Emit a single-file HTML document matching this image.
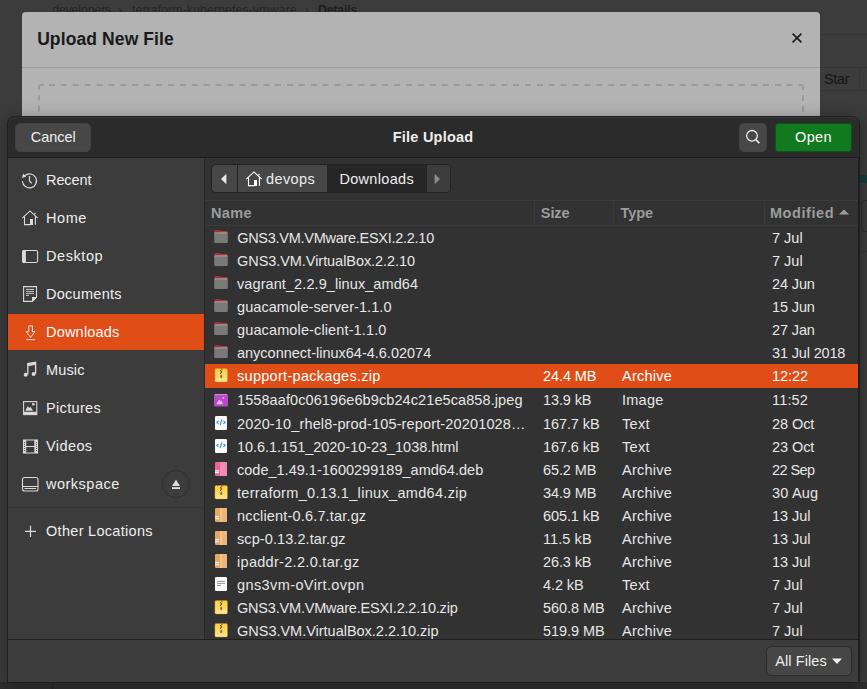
<!DOCTYPE html>
<html><head><meta charset="utf-8">
<style>
*{margin:0;padding:0;box-sizing:border-box}
html,body{width:867px;height:689px;overflow:hidden;background:#3c3c3c;font-family:"Liberation Sans",sans-serif}
.a{position:absolute}
.t{position:absolute;white-space:nowrap;line-height:14px;font-size:14.5px}
.i{position:absolute;width:16px;height:16px}
.i svg,.s svg{display:block}
.s{position:absolute;width:24px;height:24px}
#modal{left:22px;top:12px;width:798px;height:120px;background:#b3b3b3;border-radius:4px 4px 0 0}
#dlg{left:7px;top:116px;width:853px;height:567px;background:#1f1f1f;border-radius:8px 8px 0 0;box-shadow:0 3px 16px 1px rgba(0,0,0,.3)}
#hdr{left:8px;top:117px;width:851px;height:40px;background:#2b2b2b;border-radius:7px 7px 0 0;box-shadow:inset 0 1px 0 #343434}
#side{left:8px;top:158px;width:196px;height:481px;background:#3c3c3c}
#list{left:205px;top:158px;width:653px;height:481px;background:#323232}
#foot{left:8px;top:640px;width:850px;height:42px;background:#3c3c3c}
.btn{position:absolute;background:#474747;border:1px solid #424242;border-radius:5px}
.hl{position:absolute;height:1px;background:#3b3b3b}
.vl{position:absolute;width:1px;background:#3b3b3b}
</style></head><body>
<div class="t" id="t0" style="left:52.00px;top:3px;color:#262626;font-size:12.5px;letter-spacing:-0.200px">developers</div>
<div class="t" id="t1" style="left:118.00px;top:3px;color:#262626;font-size:12.5px">&#x203A;</div>
<div class="t" id="t2" style="left:132.00px;top:3px;color:#262626;font-size:12.5px">terraform-kubernetes-vmware</div>
<div class="t" id="t3" style="left:305.00px;top:3px;color:#262626;font-size:12.5px">&#x203A;</div>
<div class="t" id="t4" style="left:318.00px;top:3px;color:#1e1e1e;font-size:12.5px;font-weight:bold;letter-spacing:-0.300px">Details</div>
<div class="a" style="left:859px;top:175px;width:8px;height:8px;background:#173d3b"></div>
<div class="a" style="left:861px;top:200px;width:20px;height:32px;border:1px solid #2c2c2c;border-radius:4px"></div>
<div class="a hl" style="left:859px;top:251px;width:8px;background:#333"></div>
<div class="a" id="modal"></div>
<div class="a hl" style="left:22px;top:67px;width:798px;background:#9e9e9e"></div>
<div class="t" id="t5" style="left:37.14px;top:32px;color:#1a1a1a;font-size:17.5px;font-weight:bold;letter-spacing:0.108px">Upload New File</div>
<svg class="a" style="left:0;top:0" width="867" height="130"><g stroke="#9a9a9a" stroke-width="2" fill="none"><path d="M39 89.5 V87 Q39 85 41 85 H43.5"/><path d="M49 85 H797" stroke-dasharray="6 5.9"/><path d="M798.5 85 H801 Q803 85 803 87 V90"/><path d="M39 95 V130" stroke-dasharray="5.6 5.2"/><path d="M803 95 V130" stroke-dasharray="6 5"/></g></svg>
<svg class="a" style="left:790px;top:31px" width="14" height="14" viewBox="0 0 14 14"><path d="M2.6 2.6 L11.4 11.4 M11.4 2.6 L2.6 11.4" stroke="#1c1c1c" stroke-width="1.7"/></svg>
<div class="a hl" style="left:820px;top:34px;width:47px;background:#353535"></div>
<div class="a hl" style="left:820px;top:67px;width:47px;background:#353535"></div>
<div class="a hl" style="left:820px;top:90px;width:47px;background:#353535"></div>
<div class="a vl" style="left:859px;top:67px;height:23px;background:#353535"></div>
<div class="t" id="t6" style="left:824.06px;top:72px;color:#141414;font-size:14.5px;letter-spacing:-0.463px">Star</div>
<div class="a" style="left:0;top:682px;width:867px;height:7px;background:#2e2e2e"></div><div class="a vl" style="left:52px;top:682px;height:7px;background:#232323"></div>
<div class="a" id="dlg"></div><div class="a" id="hdr"></div><div class="a" id="side"></div><div class="a" id="list"></div><div class="a" id="foot"></div>
<div class="btn" style="left:15px;top:123px;width:76px;height:29px"></div>
<div class="t" id="t7" style="left:30.74px;top:130px;color:#eeeeee;font-size:14.5px;letter-spacing:-0.041px">Cancel</div>
<div class="t" id="t8" style="left:392.77px;top:130px;color:#eeeeee;font-size:14.5px;font-weight:bold;letter-spacing:0.229px">File Upload</div>
<div class="btn" style="left:739px;top:123px;width:28px;height:29px"></div>
<svg class="a" style="left:743px;top:127px" width="20" height="20" viewBox="0 0 20 20"><circle cx="9" cy="8.8" r="5.3" stroke="#e8e8e8" stroke-width="1.3" fill="none"/><path d="M12.8 12.6 L16.3 16.1" stroke="#e8e8e8" stroke-width="1.8"/></svg>
<div class="btn" style="left:775px;top:123px;width:77px;height:29px;background:#117a1f;border-color:#0b5214;border-radius:3px"></div>
<div class="t" id="t9" style="left:794.94px;top:130px;color:#ffffff;font-size:14.5px;letter-spacing:0.422px">Open</div>
<div class="a" style="left:8px;top:314px;width:196px;height:36px;background:#e14d17"></div>
<div class="s" style="left:18px;top:168px"><svg width="24" height="24" viewBox="0 0 24 24"><path d="M6.9 7.6 A7 7 0 1 1 4.5 13.2" stroke="#dadada" stroke-width="1.2" fill="none"/><path d="M3.9 9.9 L8.3 8.4 L5.2 5.8 Z" fill="#dadada"/><path d="M11.5 8.1 V13.2 L13.9 15.3" stroke="#dadada" stroke-width="1.2" fill="none"/></svg></div>
<div class="t" id="t10" style="left:46.00px;top:173px;color:#eeeeee;font-size:14.5px;letter-spacing:-0.087px">Recent</div>
<div class="s" style="left:18px;top:206px"><svg width="24" height="24" viewBox="0 0 24 24"><path d="M4.3 12.2 L12 4.9 L19.7 12.2" stroke="#dadada" stroke-width="1.1" fill="none"/><path d="M6.5 10.6 V18.6 H12.6 M17.4 10.6 V18.8" stroke="#dadada" stroke-width="1.1" fill="none"/><rect x="12" y="13" width="3" height="6" fill="#dadada"/><circle cx="17" cy="7.6" r="0.8" fill="#dadada"/></svg></div>
<div class="t" id="t11" style="left:46.00px;top:211px;color:#eeeeee;font-size:14.5px;letter-spacing:0.567px">Home</div>
<div class="s" style="left:18px;top:244px"><svg width="24" height="24" viewBox="0 0 24 24"><rect x="4.6" y="6.5" width="15" height="12" rx="1.6" stroke="#dadada" stroke-width="1.1" fill="none"/><rect x="4.3" y="6.2" width="3.6" height="12.6" rx="1" fill="#dadada"/></svg></div>
<div class="t" id="t12" style="left:46.00px;top:249px;color:#eeeeee;font-size:14.5px;letter-spacing:0.568px">Desktop</div>
<div class="s" style="left:18px;top:282px"><svg width="24" height="24" viewBox="0 0 24 24"><path d="M5.6 4.6 H18.5 V15 L14.4 19.4 H5.6 Z" stroke="#dadada" stroke-width="1.1" fill="none"/><path d="M14 15 H18.8 L14 19.8 Z" fill="#dadada"/><path d="M8 7.4 H16 M8 9.4 H16 M8 11.4 H16 M8 13.4 H11" stroke="#dadada" stroke-width="0.9"/></svg></div>
<div class="t" id="t13" style="left:46.00px;top:287px;color:#eeeeee;font-size:14.5px;letter-spacing:0.278px">Documents</div>
<div class="s" style="left:18px;top:320px"><svg width="24" height="24" viewBox="0 0 24 24"><path d="M10.8 5.8 H14.4 V11.6 H16.9 L12.6 17.4 L8.3 11.6 H10.8 Z" stroke="#ffe6d6" stroke-width="1" fill="none"/><path d="M8.2 19.6 H17" stroke="#ffe6d6" stroke-width="1"/></svg></div>
<div class="t" id="t14" style="left:46.00px;top:325px;color:#ffffff;font-size:14.5px;letter-spacing:0.202px">Downloads</div>
<div class="s" style="left:18px;top:358px"><svg width="24" height="24" viewBox="0 0 24 24"><path d="M9.8 16.5 V5.6 L17.6 4.2 V15.8" stroke="#dadada" stroke-width="1.3" fill="none"/><path d="M9.8 5.6 L17.6 4.2 V6.8 L9.8 8.2 Z" fill="#dadada"/><circle cx="7.7" cy="16.8" r="2" fill="#dadada"/><circle cx="15.6" cy="16" r="2" fill="#dadada"/></svg></div>
<div class="t" id="t15" style="left:46.00px;top:363px;color:#eeeeee;font-size:14.5px;letter-spacing:0.148px">Music</div>
<div class="s" style="left:18px;top:396px"><svg width="24" height="24" viewBox="0 0 24 24"><rect x="5.6" y="5.6" width="13.2" height="13" stroke="#dadada" stroke-width="1.1" fill="none"/><rect x="5.6" y="15.8" width="13.2" height="2.8" fill="#dadada"/><path d="M7.2 14.8 L9.8 10 L11.2 12 L12.4 10.8 L15 14.8 Z" fill="#dadada"/><circle cx="15.3" cy="8.3" r="1.3" fill="#dadada"/></svg></div>
<div class="t" id="t16" style="left:46.00px;top:401px;color:#eeeeee;font-size:14.5px;letter-spacing:0.339px">Pictures</div>
<div class="s" style="left:18px;top:434px"><svg width="24" height="24" viewBox="0 0 24 24"><path d="M5.5 6 H19.5 V19 H5.5 Z" stroke="#dadada" stroke-width="1.1" fill="none"/><path d="M7.7 6 V19 M16.9 6 V19 M7.7 12.5 H16.9" stroke="#dadada" stroke-width="1.1"/><path d="M5.5 6 H7.7 V19 H5.5 Z M16.9 6 H19.5 V19 H16.9 Z" fill="#dadada"/><g fill="#3c3c3c"><circle cx="6.5" cy="8.5" r="0.55"/><circle cx="6.5" cy="10.5" r="0.55"/><circle cx="6.5" cy="12.5" r="0.55"/><circle cx="6.5" cy="14.5" r="0.55"/><circle cx="6.5" cy="16.5" r="0.55"/><circle cx="18.5" cy="8.5" r="0.55"/><circle cx="18.5" cy="10.5" r="0.55"/><circle cx="18.5" cy="12.5" r="0.55"/><circle cx="18.5" cy="14.5" r="0.55"/><circle cx="18.5" cy="16.5" r="0.55"/></g></svg></div>
<div class="t" id="t17" style="left:46.00px;top:439px;color:#eeeeee;font-size:14.5px;letter-spacing:0.406px">Videos</div>
<div class="s" style="left:18px;top:472px"><svg width="24" height="24" viewBox="0 0 24 24"><rect x="4.5" y="5.5" width="15.5" height="13.5" rx="2" stroke="#dadada" stroke-width="1.1" fill="none"/><path d="M4.5 14.5 H20 M6.5 16.5 H18" stroke="#dadada" stroke-width="1.1"/></svg></div>
<div class="t" id="t18" style="left:46.00px;top:477px;color:#eeeeee;font-size:14.5px;letter-spacing:0.494px">workspace</div>
<svg class="a" style="left:161px;top:469px" width="30" height="30" viewBox="0 0 30 30"><circle cx="15" cy="15" r="13.6" stroke="#2e2e2e" stroke-width="1" fill="none"/><path d="M11 17 L15 10.7 L19 17 Z" fill="#dcdcdc"/><rect x="11" y="18.2" width="8" height="1.8" fill="#dcdcdc"/></svg>
<div class="a hl" style="left:8px;top:507px;width:196px;background:#363636"></div>
<div class="s" style="left:18px;top:519px"><svg width="24" height="24" viewBox="0 0 24 24"><path d="M12.5 6.8 V18 M7 12.4 H18" stroke="#dadada" stroke-width="1.2"/></svg></div>
<div class="t" id="t19" style="left:46.00px;top:524px;color:#eeeeee;font-size:14.5px;letter-spacing:0.300px">Other Locations</div>
<div class="a vl" style="left:204px;top:158px;height:481px;background:#282828"></div>
<div class="a" style="left:211px;top:164px;width:240px;height:29px;background:#474747;border:1px solid #232323;border-radius:5px;overflow:hidden"><div class="a" style="left:115px;top:0;width:100px;height:27px;background:#262626"></div><div class="a" style="left:25px;top:0;width:1px;height:27px;background:#232323"></div><div class="a" style="left:215px;top:0;width:24px;height:27px;background:#3c3c3c"></div></div>
<svg class="a" style="left:220px;top:173px" width="8" height="12" viewBox="0 0 8 12"><path d="M6.4 0.8 V11.2 L1 6 Z" fill="#e8e8e8"/></svg>
<svg class="a" style="left:433px;top:173px" width="8" height="12" viewBox="0 0 8 12"><path d="M1.6 0.8 V11.2 L7 6 Z" fill="#8a8a8a"/></svg>
<div class="s" style="left:242px;top:167px"><svg width="24" height="24" viewBox="0 0 24 24"><path d="M4.3 12.2 L12 4.9 L19.7 12.2" stroke="#ffffff" stroke-width="1.1" fill="none"/><path d="M6.5 10.6 V18.6 H12.6 M17.4 10.6 V18.8" stroke="#ffffff" stroke-width="1.1" fill="none"/><rect x="12" y="13" width="3" height="6" fill="#ffffff"/><circle cx="17" cy="7.6" r="0.8" fill="#ffffff"/></svg></div>
<div class="t" id="t20" style="left:265.94px;top:172px;color:#eeeeee;font-size:14.5px;letter-spacing:0.414px">devops</div>
<div class="t" id="t21" style="left:339.39px;top:172px;color:#eeeeee;font-size:14.5px;letter-spacing:0.321px">Downloads</div>
<div class="a hl" style="left:205px;top:200px;width:653px"></div>
<div class="a hl" style="left:205px;top:225px;width:653px"></div>
<div class="a vl" style="left:534px;top:201px;height:24px"></div>
<div class="a vl" style="left:613px;top:201px;height:24px"></div>
<div class="a vl" style="left:764px;top:201px;height:24px"></div>
<div class="t" id="t22" style="left:210.94px;top:206px;color:#9c9c9c;font-size:14.5px;font-weight:bold;letter-spacing:0.411px">Name</div>
<div class="t" id="t23" style="left:540.85px;top:206px;color:#9c9c9c;font-size:14.5px;font-weight:bold;letter-spacing:-0.085px">Size</div>
<div class="t" id="t24" style="left:620.41px;top:206px;color:#9c9c9c;font-size:14.5px;font-weight:bold;letter-spacing:-0.002px">Type</div>
<div class="t" id="t25" style="left:769.88px;top:206px;color:#9c9c9c;font-size:14.5px;font-weight:bold;letter-spacing:0.576px">Modified</div>
<svg class="a" style="left:838px;top:208px" width="12" height="8" viewBox="0 0 12 8"><path d="M1 6.5 L6 1.5 L11 6.5 Z" fill="#9c9c9c"/></svg>
<div class="i" style="left:213px;top:229px"><svg width="16" height="16" viewBox="0 0 16 16"><path d="M1.5 2.5 Q1.5 1.2 2.8 1.2 H6.8 L7.9 2.2 H13.4 Q14.6 2.2 14.6 3.4 V4.5 H1.5 Z" fill="#cf4630"/><path d="M1.5 2.5 Q1.5 1.2 2.8 1.2 H6.8 L7.9 2.2 V4.5 H1.5 Z" fill="#a32a4f"/><path d="M1.2 4.6 Q1.2 3.4 2.4 3.4 H13.6 Q14.8 3.4 14.8 4.6 V12.8 Q14.8 14 13.6 14 H2.4 Q1.2 14 1.2 12.8 Z" fill="#7a7a7a"/><rect x="1.8" y="3.5" width="12.4" height="0.9" fill="#a8a8a8"/></svg></div>
<div class="t" id="t26" style="left:237.16px;top:231px;color:#e6e6e6;font-size:14.5px;letter-spacing:-0.274px">GNS3.VM.VMware.ESXI.2.2.10</div>
<div class="t" id="t27" style="left:772.00px;top:231px;color:#e6e6e6;font-size:14.5px;letter-spacing:0.004px">7 Jul</div>
<div class="i" style="left:213px;top:252px"><svg width="16" height="16" viewBox="0 0 16 16"><path d="M1.5 2.5 Q1.5 1.2 2.8 1.2 H6.8 L7.9 2.2 H13.4 Q14.6 2.2 14.6 3.4 V4.5 H1.5 Z" fill="#cf4630"/><path d="M1.5 2.5 Q1.5 1.2 2.8 1.2 H6.8 L7.9 2.2 V4.5 H1.5 Z" fill="#a32a4f"/><path d="M1.2 4.6 Q1.2 3.4 2.4 3.4 H13.6 Q14.8 3.4 14.8 4.6 V12.8 Q14.8 14 13.6 14 H2.4 Q1.2 14 1.2 12.8 Z" fill="#7a7a7a"/><rect x="1.8" y="3.5" width="12.4" height="0.9" fill="#a8a8a8"/></svg></div>
<div class="t" id="t28" style="left:237.00px;top:254px;color:#e6e6e6;font-size:14.5px;letter-spacing:-0.056px">GNS3.VM.VirtualBox.2.2.10</div>
<div class="t" id="t29" style="left:772.00px;top:254px;color:#e6e6e6;font-size:14.5px;letter-spacing:0.004px">7 Jul</div>
<div class="i" style="left:213px;top:275px"><svg width="16" height="16" viewBox="0 0 16 16"><path d="M1.5 2.5 Q1.5 1.2 2.8 1.2 H6.8 L7.9 2.2 H13.4 Q14.6 2.2 14.6 3.4 V4.5 H1.5 Z" fill="#cf4630"/><path d="M1.5 2.5 Q1.5 1.2 2.8 1.2 H6.8 L7.9 2.2 V4.5 H1.5 Z" fill="#a32a4f"/><path d="M1.2 4.6 Q1.2 3.4 2.4 3.4 H13.6 Q14.8 3.4 14.8 4.6 V12.8 Q14.8 14 13.6 14 H2.4 Q1.2 14 1.2 12.8 Z" fill="#7a7a7a"/><rect x="1.8" y="3.5" width="12.4" height="0.9" fill="#a8a8a8"/></svg></div>
<div class="t" id="t30" style="left:237.00px;top:277px;color:#e6e6e6;font-size:14.5px;letter-spacing:0.087px">vagrant_2.2.9_linux_amd64</div>
<div class="t" id="t31" style="left:772.00px;top:277px;color:#e6e6e6;font-size:14.5px;letter-spacing:-0.121px">24 Jun</div>
<div class="i" style="left:213px;top:298px"><svg width="16" height="16" viewBox="0 0 16 16"><path d="M1.5 2.5 Q1.5 1.2 2.8 1.2 H6.8 L7.9 2.2 H13.4 Q14.6 2.2 14.6 3.4 V4.5 H1.5 Z" fill="#cf4630"/><path d="M1.5 2.5 Q1.5 1.2 2.8 1.2 H6.8 L7.9 2.2 V4.5 H1.5 Z" fill="#a32a4f"/><path d="M1.2 4.6 Q1.2 3.4 2.4 3.4 H13.6 Q14.8 3.4 14.8 4.6 V12.8 Q14.8 14 13.6 14 H2.4 Q1.2 14 1.2 12.8 Z" fill="#7a7a7a"/><rect x="1.8" y="3.5" width="12.4" height="0.9" fill="#a8a8a8"/></svg></div>
<div class="t" id="t32" style="left:237.00px;top:300px;color:#e6e6e6;font-size:14.5px;letter-spacing:0.063px">guacamole-server-1.1.0</div>
<div class="t" id="t33" style="left:772.00px;top:300px;color:#e6e6e6;font-size:14.5px;letter-spacing:-0.121px">15 Jun</div>
<div class="i" style="left:213px;top:321px"><svg width="16" height="16" viewBox="0 0 16 16"><path d="M1.5 2.5 Q1.5 1.2 2.8 1.2 H6.8 L7.9 2.2 H13.4 Q14.6 2.2 14.6 3.4 V4.5 H1.5 Z" fill="#cf4630"/><path d="M1.5 2.5 Q1.5 1.2 2.8 1.2 H6.8 L7.9 2.2 V4.5 H1.5 Z" fill="#a32a4f"/><path d="M1.2 4.6 Q1.2 3.4 2.4 3.4 H13.6 Q14.8 3.4 14.8 4.6 V12.8 Q14.8 14 13.6 14 H2.4 Q1.2 14 1.2 12.8 Z" fill="#7a7a7a"/><rect x="1.8" y="3.5" width="12.4" height="0.9" fill="#a8a8a8"/></svg></div>
<div class="t" id="t34" style="left:237.00px;top:323px;color:#e6e6e6;font-size:14.5px;letter-spacing:0.128px">guacamole-client-1.1.0</div>
<div class="t" id="t35" style="left:772.00px;top:323px;color:#e6e6e6;font-size:14.5px;letter-spacing:-0.121px">27 Jan</div>
<div class="i" style="left:213px;top:344px"><svg width="16" height="16" viewBox="0 0 16 16"><path d="M1.5 2.5 Q1.5 1.2 2.8 1.2 H6.8 L7.9 2.2 H13.4 Q14.6 2.2 14.6 3.4 V4.5 H1.5 Z" fill="#cf4630"/><path d="M1.5 2.5 Q1.5 1.2 2.8 1.2 H6.8 L7.9 2.2 V4.5 H1.5 Z" fill="#a32a4f"/><path d="M1.2 4.6 Q1.2 3.4 2.4 3.4 H13.6 Q14.8 3.4 14.8 4.6 V12.8 Q14.8 14 13.6 14 H2.4 Q1.2 14 1.2 12.8 Z" fill="#7a7a7a"/><rect x="1.8" y="3.5" width="12.4" height="0.9" fill="#a8a8a8"/></svg></div>
<div class="t" id="t36" style="left:237.00px;top:346px;color:#e6e6e6;font-size:14.5px;letter-spacing:-0.003px">anyconnect-linux64-4.6.02074</div>
<div class="t" id="t37" style="left:772.00px;top:346px;color:#e6e6e6;font-size:14.5px;letter-spacing:-0.154px">31 Jul 2018</div>
<div class="a" style="left:205px;top:364px;width:653px;height:24px;background:#e14d17"></div>
<div class="i" style="left:213px;top:367px"><svg width="16" height="16" viewBox="0 0 16 16"><defs><linearGradient id="gz" x1="0" y1="0" x2="0" y2="1"><stop offset="0" stop-color="#fdcf3c"/><stop offset="1" stop-color="#fee48e"/></linearGradient></defs><rect x="1.9" y="1.5" width="12.6" height="13.6" rx="1.4" fill="url(#gz)" stroke="#b8862a" stroke-opacity="0.5" stroke-width="0.6"/><path d="M8.1 1.6 L9.1 2.6 L7.1 3.8 L9.1 5.0 L7.1 6.2 L8.4 7.2" stroke="#4e3f26" stroke-width="0.8" fill="none"/><rect x="7.2" y="8.2" width="2" height="2.8" fill="#9c7a56"/><rect x="7.6" y="8.6" width="1.2" height="1" fill="#6b5238"/></svg></div>
<div class="t" id="t38" style="left:237.00px;top:369px;color:#ffffff;font-size:14.5px;letter-spacing:0.295px">support-packages.zip</div>
<div class="t" id="t39" style="left:543.00px;top:369px;color:#ffffff;font-size:14.5px;letter-spacing:-0.083px">24.4 MB</div>
<div class="t" id="t40" style="left:622.00px;top:369px;color:#ffffff;font-size:14.5px;letter-spacing:0.262px">Archive</div>
<div class="t" id="t41" style="left:772.00px;top:369px;color:#ffffff;font-size:14.5px;letter-spacing:-0.046px">12:22</div>
<div class="i" style="left:213px;top:391px"><svg width="16" height="16" viewBox="0 0 16 16"><rect x="1" y="3" width="14" height="12.5" rx="1.2" fill="#b649c6"/><rect x="2" y="3.2" width="12" height="0.9" fill="#d892e2"/><path d="M3.3 13.3 L6.2 8.4 L7.5 10.2 L8.3 9.4 L10.2 13.3 Z" fill="#eab8ef"/><rect x="9.6" y="6.1" width="1.6" height="1.6" fill="#e8b0ee"/></svg></div>
<div class="t" id="t42" style="left:237.00px;top:393px;color:#e6e6e6;font-size:14.5px;letter-spacing:0.090px">1558aaf0c06196e6b9cb24c21e5ca858.jpeg</div>
<div class="t" id="t43" style="left:543.00px;top:393px;color:#e6e6e6;font-size:14.5px;letter-spacing:-0.105px">13.9 kB</div>
<div class="t" id="t44" style="left:622.00px;top:393px;color:#e6e6e6;font-size:14.5px;letter-spacing:0.236px">Image</div>
<div class="t" id="t45" style="left:772.00px;top:393px;color:#e6e6e6;font-size:14.5px;letter-spacing:0.165px">11:52</div>
<div class="i" style="left:213px;top:415px"><svg width="16" height="16" viewBox="0 0 16 16"><rect x="2" y="1" width="12" height="14" rx="1.2" fill="#fbfbfb"/><path d="M5.6 5.8 L3.8 7.3 L5.6 8.8 M10.4 5.8 L12.2 7.3 L10.4 8.8 M8.8 4.3 L7.2 10.2" stroke="#3a8ee6" stroke-width="1.1" fill="none"/></svg></div>
<div class="t" id="t46" style="left:237.00px;top:417px;color:#e6e6e6;font-size:14.5px;letter-spacing:0.147px">2020-10_rhel8-prod-105-report-20201028…</div>
<div class="t" id="t47" style="left:543.00px;top:417px;color:#e6e6e6;font-size:14.5px;letter-spacing:-0.089px">167.7 kB</div>
<div class="t" id="t48" style="left:622.00px;top:417px;color:#e6e6e6;font-size:14.5px;letter-spacing:0.345px">Text</div>
<div class="t" id="t49" style="left:772.00px;top:417px;color:#e6e6e6;font-size:14.5px;letter-spacing:-0.071px">28 Oct</div>
<div class="i" style="left:213px;top:438px"><svg width="16" height="16" viewBox="0 0 16 16"><rect x="2" y="1" width="12" height="14" rx="1.2" fill="#fbfbfb"/><path d="M5.6 5.8 L3.8 7.3 L5.6 8.8 M10.4 5.8 L12.2 7.3 L10.4 8.8 M8.8 4.3 L7.2 10.2" stroke="#3a8ee6" stroke-width="1.1" fill="none"/></svg></div>
<div class="t" id="t50" style="left:237.00px;top:440px;color:#e6e6e6;font-size:14.5px;letter-spacing:-0.034px">10.6.1.151_2020-10-23_1038.html</div>
<div class="t" id="t51" style="left:543.00px;top:440px;color:#e6e6e6;font-size:14.5px;letter-spacing:-0.089px">167.6 kB</div>
<div class="t" id="t52" style="left:622.00px;top:440px;color:#e6e6e6;font-size:14.5px;letter-spacing:0.345px">Text</div>
<div class="t" id="t53" style="left:772.00px;top:440px;color:#e6e6e6;font-size:14.5px;letter-spacing:-0.071px">23 Oct</div>
<div class="i" style="left:213px;top:461px"><svg width="16" height="16" viewBox="0 0 16 16"><rect x="2" y="1" width="12" height="14" rx="1.2" fill="#f0639a"/><rect x="8.5" y="1" width="5.5" height="14" rx="1" fill="#f38ab2"/><rect x="7.4" y="1" width="1.2" height="14" fill="#f4a6c4"/><rect x="2" y="9.3" width="3.9" height="2.9" fill="#ffffff"/><rect x="2" y="10.5" width="3.9" height="0.6" fill="#9a9a9a"/></svg></div>
<div class="t" id="t54" style="left:237.00px;top:463px;color:#e6e6e6;font-size:14.5px;letter-spacing:0.009px">code_1.49.1-1600299189_amd64.deb</div>
<div class="t" id="t55" style="left:543.00px;top:463px;color:#e6e6e6;font-size:14.5px;letter-spacing:-0.102px">65.2 MB</div>
<div class="t" id="t56" style="left:622.00px;top:463px;color:#e6e6e6;font-size:14.5px;letter-spacing:0.250px">Archive</div>
<div class="t" id="t57" style="left:772.00px;top:463px;color:#e6e6e6;font-size:14.5px;letter-spacing:-0.574px">22 Sep</div>
<div class="i" style="left:213px;top:484px"><svg width="16" height="16" viewBox="0 0 16 16"><defs><linearGradient id="gz" x1="0" y1="0" x2="0" y2="1"><stop offset="0" stop-color="#fdcf3c"/><stop offset="1" stop-color="#fee48e"/></linearGradient></defs><rect x="1.9" y="1.5" width="12.6" height="13.6" rx="1.4" fill="url(#gz)" stroke="#b8862a" stroke-opacity="0.5" stroke-width="0.6"/><path d="M8.1 1.6 L9.1 2.6 L7.1 3.8 L9.1 5.0 L7.1 6.2 L8.4 7.2" stroke="#4e3f26" stroke-width="0.8" fill="none"/><rect x="7.2" y="8.2" width="2" height="2.8" fill="#9c7a56"/><rect x="7.6" y="8.6" width="1.2" height="1" fill="#6b5238"/></svg></div>
<div class="t" id="t58" style="left:237.00px;top:486px;color:#e6e6e6;font-size:14.5px;letter-spacing:0.315px">terraform_0.13.1_linux_amd64.zip</div>
<div class="t" id="t59" style="left:543.00px;top:486px;color:#e6e6e6;font-size:14.5px;letter-spacing:-0.102px">34.9 MB</div>
<div class="t" id="t60" style="left:622.00px;top:486px;color:#e6e6e6;font-size:14.5px;letter-spacing:0.250px">Archive</div>
<div class="t" id="t61" style="left:772.00px;top:486px;color:#e6e6e6;font-size:14.5px;letter-spacing:0.189px">30 Aug</div>
<div class="i" style="left:213px;top:507px"><svg width="16" height="16" viewBox="0 0 16 16"><rect x="2" y="1" width="12" height="14" rx="1.2" fill="#e9a765"/><rect x="8.6" y="1" width="5.4" height="14" rx="1" fill="#edb47c"/><rect x="7.3" y="1" width="1.4" height="14" fill="#f4d296"/><rect x="2" y="9.3" width="3.9" height="2.9" fill="#ffffff"/><rect x="2" y="10.5" width="3.9" height="0.7" fill="#888"/></svg></div>
<div class="t" id="t62" style="left:237.00px;top:509px;color:#e6e6e6;font-size:14.5px;letter-spacing:0.169px">ncclient-0.6.7.tar.gz</div>
<div class="t" id="t63" style="left:543.00px;top:509px;color:#e6e6e6;font-size:14.5px;letter-spacing:-0.089px">605.1 kB</div>
<div class="t" id="t64" style="left:622.00px;top:509px;color:#e6e6e6;font-size:14.5px;letter-spacing:0.250px">Archive</div>
<div class="t" id="t65" style="left:772.00px;top:509px;color:#e6e6e6;font-size:14.5px;letter-spacing:-0.046px">13 Jul</div>
<div class="i" style="left:213px;top:530px"><svg width="16" height="16" viewBox="0 0 16 16"><rect x="2" y="1" width="12" height="14" rx="1.2" fill="#e9a765"/><rect x="8.6" y="1" width="5.4" height="14" rx="1" fill="#edb47c"/><rect x="7.3" y="1" width="1.4" height="14" fill="#f4d296"/><rect x="2" y="9.3" width="3.9" height="2.9" fill="#ffffff"/><rect x="2" y="10.5" width="3.9" height="0.7" fill="#888"/></svg></div>
<div class="t" id="t66" style="left:237.00px;top:532px;color:#e6e6e6;font-size:14.5px;letter-spacing:0.087px">scp-0.13.2.tar.gz</div>
<div class="t" id="t67" style="left:543.00px;top:532px;color:#e6e6e6;font-size:14.5px;letter-spacing:0.087px">11.5 kB</div>
<div class="t" id="t68" style="left:622.00px;top:532px;color:#e6e6e6;font-size:14.5px;letter-spacing:0.250px">Archive</div>
<div class="t" id="t69" style="left:772.00px;top:532px;color:#e6e6e6;font-size:14.5px;letter-spacing:-0.046px">13 Jul</div>
<div class="i" style="left:213px;top:553px"><svg width="16" height="16" viewBox="0 0 16 16"><rect x="2" y="1" width="12" height="14" rx="1.2" fill="#e9a765"/><rect x="8.6" y="1" width="5.4" height="14" rx="1" fill="#edb47c"/><rect x="7.3" y="1" width="1.4" height="14" fill="#f4d296"/><rect x="2" y="9.3" width="3.9" height="2.9" fill="#ffffff"/><rect x="2" y="10.5" width="3.9" height="0.7" fill="#888"/></svg></div>
<div class="t" id="t70" style="left:237.00px;top:555px;color:#e6e6e6;font-size:14.5px;letter-spacing:0.301px">ipaddr-2.2.0.tar.gz</div>
<div class="t" id="t71" style="left:543.00px;top:555px;color:#e6e6e6;font-size:14.5px;letter-spacing:-0.105px">26.3 kB</div>
<div class="t" id="t72" style="left:622.00px;top:555px;color:#e6e6e6;font-size:14.5px;letter-spacing:0.250px">Archive</div>
<div class="t" id="t73" style="left:772.00px;top:555px;color:#e6e6e6;font-size:14.5px;letter-spacing:-0.046px">13 Jul</div>
<div class="i" style="left:213px;top:576px"><svg width="16" height="16" viewBox="0 0 16 16"><rect x="2" y="1" width="12" height="14" rx="1.2" fill="#fbfbfb"/><rect x="4" y="4.9" width="8" height="0.9" fill="#8a8a8a"/><rect x="4" y="6.9" width="8" height="0.9" fill="#8a8a8a"/><rect x="4" y="8.9" width="4" height="0.9" fill="#8a8a8a"/></svg></div>
<div class="t" id="t74" style="left:237.00px;top:578px;color:#e6e6e6;font-size:14.5px;letter-spacing:0.398px">gns3vm-oVirt.ovpn</div>
<div class="t" id="t75" style="left:543.00px;top:578px;color:#e6e6e6;font-size:14.5px;letter-spacing:-0.091px">4.2 kB</div>
<div class="t" id="t76" style="left:622.00px;top:578px;color:#e6e6e6;font-size:14.5px;letter-spacing:0.345px">Text</div>
<div class="t" id="t77" style="left:772.00px;top:578px;color:#e6e6e6;font-size:14.5px;letter-spacing:0.004px">7 Jul</div>
<div class="i" style="left:213px;top:599px"><svg width="16" height="16" viewBox="0 0 16 16"><defs><linearGradient id="gz" x1="0" y1="0" x2="0" y2="1"><stop offset="0" stop-color="#fdcf3c"/><stop offset="1" stop-color="#fee48e"/></linearGradient></defs><rect x="1.9" y="1.5" width="12.6" height="13.6" rx="1.4" fill="url(#gz)" stroke="#b8862a" stroke-opacity="0.5" stroke-width="0.6"/><path d="M8.1 1.6 L9.1 2.6 L7.1 3.8 L9.1 5.0 L7.1 6.2 L8.4 7.2" stroke="#4e3f26" stroke-width="0.8" fill="none"/><rect x="7.2" y="8.2" width="2" height="2.8" fill="#9c7a56"/><rect x="7.6" y="8.6" width="1.2" height="1" fill="#6b5238"/></svg></div>
<div class="t" id="t78" style="left:237.00px;top:601px;color:#e6e6e6;font-size:14.5px;letter-spacing:-0.197px">GNS3.VM.VMware.ESXI.2.2.10.zip</div>
<div class="t" id="t79" style="left:543.00px;top:601px;color:#e6e6e6;font-size:14.5px;letter-spacing:-0.066px">560.8 MB</div>
<div class="t" id="t80" style="left:622.00px;top:601px;color:#e6e6e6;font-size:14.5px;letter-spacing:0.250px">Archive</div>
<div class="t" id="t81" style="left:772.00px;top:601px;color:#e6e6e6;font-size:14.5px;letter-spacing:0.004px">7 Jul</div>
<div class="i" style="left:213px;top:622px"><svg width="16" height="16" viewBox="0 0 16 16"><defs><linearGradient id="gz" x1="0" y1="0" x2="0" y2="1"><stop offset="0" stop-color="#fdcf3c"/><stop offset="1" stop-color="#fee48e"/></linearGradient></defs><rect x="1.9" y="1.5" width="12.6" height="13.6" rx="1.4" fill="url(#gz)" stroke="#b8862a" stroke-opacity="0.5" stroke-width="0.6"/><path d="M8.1 1.6 L9.1 2.6 L7.1 3.8 L9.1 5.0 L7.1 6.2 L8.4 7.2" stroke="#4e3f26" stroke-width="0.8" fill="none"/><rect x="7.2" y="8.2" width="2" height="2.8" fill="#9c7a56"/><rect x="7.6" y="8.6" width="1.2" height="1" fill="#6b5238"/></svg></div>
<div class="t" id="t82" style="left:237.00px;top:624px;color:#e6e6e6;font-size:14.5px;letter-spacing:-0.015px">GNS3.VM.VirtualBox.2.2.10.zip</div>
<div class="t" id="t83" style="left:543.00px;top:624px;color:#e6e6e6;font-size:14.5px;letter-spacing:-0.066px">519.9 MB</div>
<div class="t" id="t84" style="left:622.00px;top:624px;color:#e6e6e6;font-size:14.5px;letter-spacing:0.250px">Archive</div>
<div class="t" id="t85" style="left:772.00px;top:624px;color:#e6e6e6;font-size:14.5px;letter-spacing:0.004px">7 Jul</div>
<div class="a hl" style="left:8px;top:639px;width:850px;background:#1f1f1f"></div>
<div class="btn" style="left:766px;top:646px;width:86px;height:30px;border-color:#2a2a2a;background:#464646"></div>
<div class="t" id="t86" style="left:775.24px;top:654px;color:#eeeeee;font-size:14.5px;letter-spacing:0.081px">All Files</div>
<svg class="a" style="left:831px;top:657px" width="12" height="8" viewBox="0 0 12 8"><path d="M1 1.5 L11 1.5 L6 7 Z" fill="#eeeeee"/></svg>
</body></html>
